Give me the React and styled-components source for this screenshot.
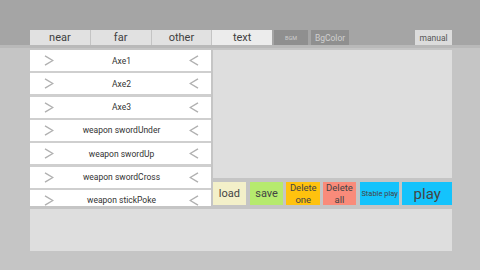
import styled, { createGlobalStyle } from 'styled-components'

const GlobalStyle = createGlobalStyle`
  html, body {
    margin: 0;
    padding: 0;
    background: #c5c5c5;
  }
  body {
    font-family: Roboto, "Liberation Sans", sans-serif;
    color: #3a3a3a;
  }
`

const Screen = styled.div`
  width: 480px;
  height: 270px;
  overflow: hidden;
  background: #c5c5c5;
  box-sizing: border-box;
`

const Header = styled.div`
  height: 48px;
  box-sizing: border-box;
  background: #a5a5a5;
  border-bottom: 3px solid #b9b9b9;
  display: flex;
  align-items: flex-end;
  padding: 0 28px 0 30px;
`

const Tabs = styled.div`
  display: flex;
  width: 242px;
  height: 15px;
`

const Tab = styled.div`
  flex: 1;
  display: flex;
  align-items: center;
  justify-content: center;
  font-size: 11px;
  color: #404040;
  background: ${p => (p.$active ? '#ececec' : '#e1e1e1')};
  border-left: 1px solid #c4c4c4;
  &:first-child {
    border-left: none;
  }
`

const DarkButton = styled.div`
  height: 15px;
  margin-left: ${p => p.$gap}px;
  width: ${p => p.$w}px;
  display: flex;
  align-items: center;
  justify-content: center;
  background: #8f8f8f;
  color: #cfcfcf;
  font-size: ${p => p.$size}px;
`

const Spacer = styled.div`
  flex: 1;
`

const ManualButton = styled.div`
  height: 15px;
  width: 37px;
  display: flex;
  align-items: center;
  justify-content: center;
  background: #dcdcdc;
  color: #555;
  font-size: 8.5px;
`

const Main = styled.div`
  display: grid;
  grid-template-columns: 181px 239px;
  column-gap: 2px;
  height: 156px;
  padding: 2px 0 0 30px;
`

const List = styled.div`
  background: #cfcfcf;
  overflow: hidden;
  display: flex;
  flex-direction: column;
  gap: 2.33px;
`

const Row = styled.div`
  flex: 0 0 21px;
  background: #ffffff;
  display: flex;
  align-items: center;
  padding: 0 12px 0 14px;
  font-size: 8.5px;
  color: #333;
`

const RowLabel = styled.div`
  flex: 1;
  text-align: center;
`

const Chevron = ({ dir }) => (
  <svg width="10" height="11" viewBox="0 0 10 11">
    <path
      d={dir === 'right' ? 'M1 0.8 L8.8 5.5 L1 10.2' : 'M9 0.8 L1.2 5.5 L9 10.2'}
      fill="none"
      stroke="#b0b0b0"
      strokeWidth="1.4"
    />
  </svg>
)

const RightColumn = styled.div`
  display: flex;
  flex-direction: column;
  gap: 4px;
`

const Preview = styled.div`
  height: 128px;
  background: #dedede;
`

const ButtonRow = styled.div`
  display: flex;
  gap: 3px;
  height: 23px;
`

const ActionButton = styled.div`
  width: ${p => p.$w}px;
  margin-left: ${p => p.$ml || 0}px;
  background: ${p => p.$bg};
  display: flex;
  flex-direction: column;
  align-items: center;
  justify-content: center;
  text-align: center;
  font-size: ${p => p.$size || 10.5}px;
  line-height: ${p => p.$lh || '1.2'};
  color: #444;
`

const Footer = styled.div`
  margin: 3px 28px 0 30px;
  height: 42px;
  background: #dedede;
`

const items = [
  'Axe1',
  'Axe2',
  'Axe3',
  'weapon swordUnder',
  'weapon swordUp',
  'weapon swordCross',
  'weapon stickPoke',
]

export default function App() {
  return (
    <Screen>
      <GlobalStyle />
      <Header>
        <Tabs>
          <Tab>near</Tab>
          <Tab>far</Tab>
          <Tab>other</Tab>
          <Tab $active>text</Tab>
        </Tabs>
        <DarkButton $gap={2} $w={34} $size={5.5}>BGM</DarkButton>
        <DarkButton $gap={3} $w={38} $size={8.5}>BgColor</DarkButton>
        <Spacer />
        <ManualButton>manual</ManualButton>
      </Header>
      <Main>
        <List>
          {items.map(name => (
            <Row key={name}>
              <Chevron dir="right" />
              <RowLabel>{name}</RowLabel>
              <Chevron dir="left" />
            </Row>
          ))}
        </List>
        <RightColumn>
          <Preview />
          <ButtonRow>
            <ActionButton $w={33} $bg="#f3f0c9" $size={11}>load</ActionButton>
            <ActionButton $w={34} $ml={1} $bg="#b6ea6e" $size={11}>save</ActionButton>
            <ActionButton $w={34} $bg="#ffc20e" $size={9.5} $lh="11.3px">
              <span>Delete</span>
              <span>one</span>
            </ActionButton>
            <ActionButton $w={33} $bg="#f98b7a" $size={9.5} $lh="11.3px">
              <span>Delete</span>
              <span>all</span>
            </ActionButton>
            <ActionButton $w={40} $ml={1} $bg="#14c3fc" $size={7.5}>Stable play</ActionButton>
            <ActionButton $w={50} $bg="#14c3fc" $size={15}>play</ActionButton>
          </ButtonRow>
        </RightColumn>
      </Main>
      <Footer />
    </Screen>
  )
}
